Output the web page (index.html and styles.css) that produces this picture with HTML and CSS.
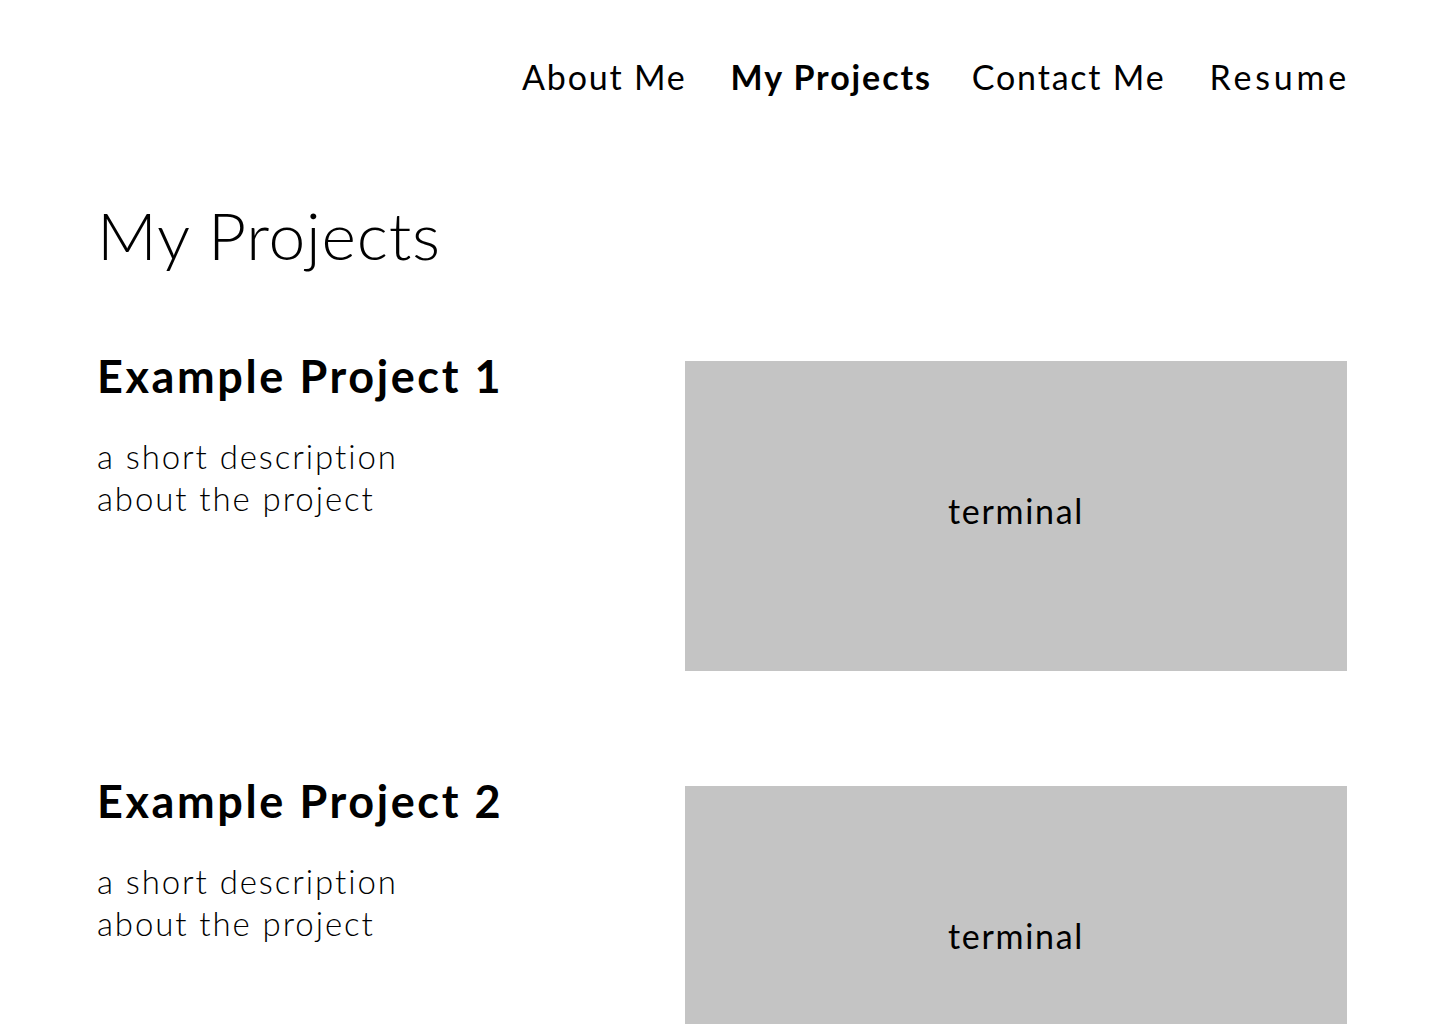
FILE: index.html
```html
<!DOCTYPE html>
<html lang="en">
<head>
<meta charset="utf-8">
<title>My Projects</title>
<link rel="stylesheet" href="styles.css">
</head>
<body>
<div class="page">
  <nav class="nav">
    <a class="nav-link" href="#">About Me</a>
    <a class="nav-link active" href="#">My Projects</a>
    <a class="nav-link" href="#">Contact Me</a>
    <a class="nav-link" href="#">Resume</a>
  </nav>
  <h1 class="page-title">My Projects</h1>
  <section class="projects">
    <article class="project">
      <div class="project-info">
        <h2 class="project-title">Example Project 1</h2>
        <p class="project-desc">a short description<br>about the project</p>
      </div>
      <div class="project-media">terminal</div>
    </article>
    <article class="project">
      <div class="project-info">
        <h2 class="project-title">Example Project 2</h2>
        <p class="project-desc">a short description<br>about the project</p>
      </div>
      <div class="project-media">terminal</div>
    </article>
  </section>
</div>
</body>
</html>
```

FILE: styles.css
```css
* { box-sizing: border-box; }
html, body { margin: 0; padding: 0; background: #fff; }
body {
  font-family: "Lato", "Open Sans", "Liberation Sans", sans-serif;
  color: #000;
}
.page {
  padding: 0 93px 0 97px;
  height: 1024px;
  overflow: hidden;
}
.nav {
  display: flex;
  justify-content: flex-end;
  gap: 44px;
  padding-top: 56px;
  margin-right: -3px;
}
.nav-link {
  color: #000;
  text-decoration: none;
  font-size: 34px;
  line-height: 41px;
  font-weight: 400;
  letter-spacing: 1.8px;
}
.nav-link.active {
  font-weight: 700;
  letter-spacing: 1.9px;
  margin-right: -4px;
}
.nav-link:last-child { letter-spacing: 3.8px; }
.page-title {
  margin: 98px 0 0 0;
  font-size: 66px;
  line-height: 80px;
  font-weight: 300;
  letter-spacing: 0.8px;
}
.projects {
  display: flex;
  flex-direction: column;
  gap: 115px;
  margin-top: 86px;
}
.project {
  display: grid;
  grid-template-columns: 1fr 662px;
  align-items: start;
}
.project-title {
  margin: -12px 0 0 0;
  font-size: 45px;
  line-height: 54px;
  font-weight: 700;
  letter-spacing: 2.6px;
}
.project-desc {
  margin: 32px 0 0 0;
  font-size: 33px;
  line-height: 42px;
  font-weight: 300;
  letter-spacing: 1.9px;
}
.project-media {
  height: 310px;
  background: #c4c4c4;
  display: flex;
  align-items: center;
  justify-content: center;
  font-size: 34px;
  font-weight: 400;
  letter-spacing: 1.7px;
  padding-bottom: 11px;
}
```
